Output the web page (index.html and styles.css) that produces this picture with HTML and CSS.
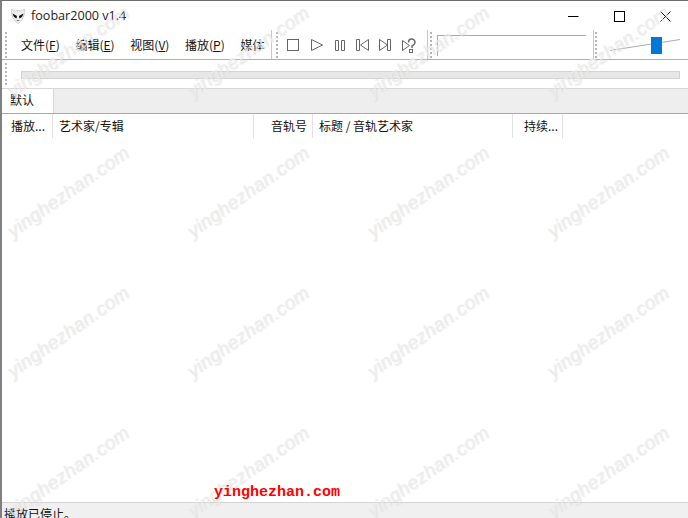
FILE: index.html
```
<!DOCTYPE html>
<html lang="zh">
<head>
<meta charset="utf-8">
<title>foobar2000 v1.4</title>
<link rel="stylesheet" href="styles.css">
</head>
<body>
<div class="window">
  <header class="titlebar">
    <svg class="logo" width="16" height="16" viewBox="0 0 16 16"><path d="M1.500 1 L5 3 Q8 2 11 3 L14.500 1 Q15 6 13 10 Q11 14 8 15.500 Q5 14 3 10 Q1 6 1.500 1Z" fill="#eeeeee" stroke="#b8b8b8" stroke-width=".6"/><path d="M2.500 5.500 L7 8 L6.500 10.500 Q3.500 9.500 2.500 5.500Z M13.500 5.500 L9 8 L9.500 10.500 Q12.500 9.500 13.500 5.500Z" fill="#111"/><path d="M6.800 12.500h2.400" stroke="#777"/></svg>
    <span class="title">foobar2000 v1.4</span>
    <div class="wincontrols">
      <svg width="11" height="11" viewBox="0 0 11 11"><path d="M0 5.500h10.500" stroke="#000"/></svg>
      <svg width="11" height="11" viewBox="0 0 11 11"><rect x=".5" y=".5" width="10" height="10" fill="none" stroke="#000"/></svg>
      <svg width="11" height="11" viewBox="0 0 11 11"><path d="M.5.5l10 10M10.500.5l-10 10" stroke="#000" fill="none"/></svg>
    </div>
  </header>
  <div class="toolbar">
    <div class="band band-menu">
      <span class="grip"></span>
      <nav class="menu">
        <span class="menu-item">文件(<u>F</u>)</span>
        <span class="menu-item">编辑(<u>E</u>)</span>
        <span class="menu-item">视图(<u>V</u>)</span>
        <span class="menu-item">播放(<u>P</u>)</span>
        <span class="menu-item">媒体</span>
      </nav>
    </div>
    <div class="band band-transport">
      <span class="grip"></span>
      <svg class="transport" width="132" height="16" viewBox="0 0 132 16" fill="none" stroke="#666">
        <rect x=".5" y="1.500" width="11" height="11"/>
        <path d="M24.500 1.500v11l11-5.500z"/>
        <path d="M48.500 2.500h3v10h-3zM54.500 2.500h3v10h-3z"/>
        <path d="M69.500 1.500v11h3v-11zM81.500 1.500v11l-8-5.500z"/>
        <path d="M103.500 1.500v11h-3v-11zM92.500 1.500v11l8-5.500z"/>
        <path d="M115.500 2.500v10l7-5z"/>
        <path d="M121.500 4.500q0-3.500 3-3.500t3.500 3q0 2.500-3 4v2" stroke-width="1.400"/>
        <rect x="122.500" y="11.500" width="3" height="3"/>
      </svg>
    </div>
    <div class="band band-seek">
      <span class="grip"></span>
      <div class="seek-frame"></div>
    </div>
    <div class="band band-volume">
      <span class="grip"></span>
      <div class="volume">
        <svg class="volume-line" width="70" height="12" viewBox="0 0 70 12"><path d="M0 11.500L70 .5" stroke="#aaa"/></svg>
        <span class="volume-thumb"></span>
      </div>
    </div>
  </div>
  <div class="seekrow">
    <span class="grip"></span>
    <div class="seekbar"></div>
  </div>
  <div class="tabs"><span class="tab">默认</span></div>
  <div class="columns">
    <span class="col col-a">播放...</span>
    <span class="col col-b">艺术家/专辑</span>
    <span class="col col-c">音轨号</span>
    <span class="col col-d">标题 / 音轨艺术家</span>
    <span class="col col-e">持续...</span>
  </div>
  <main class="list"></main>
  <footer class="status">播放已停止。</footer>
</div>
<div class="watermarks">
  <span class="wm"><b>yinghezhan.com</b></span><span class="wm"><b>yinghezhan.com</b></span><span class="wm"><b>yinghezhan.com</b></span><span class="wm"><b>yinghezhan.com</b></span>
  <span class="wm"><b>yinghezhan.com</b></span><span class="wm"><b>yinghezhan.com</b></span><span class="wm"><b>yinghezhan.com</b></span><span class="wm"><b>yinghezhan.com</b></span>
  <span class="wm"><b>yinghezhan.com</b></span><span class="wm"><b>yinghezhan.com</b></span><span class="wm"><b>yinghezhan.com</b></span><span class="wm"><b>yinghezhan.com</b></span>
  <span class="wm"><b>yinghezhan.com</b></span><span class="wm"><b>yinghezhan.com</b></span><span class="wm"><b>yinghezhan.com</b></span><span class="wm"><b>yinghezhan.com</b></span>
</div>
<div class="stamp">yinghezhan.com</div>
</body>
</html>
```
FILE: styles.css
```
* { box-sizing: border-box; }
html, body { margin: 0; height: 100%; overflow: hidden; background: #fff; }
body { position: relative; font: 12px/16px "Noto Sans CJK SC", "Liberation Sans", sans-serif; color: #111; }
.window { width: 688px; height: 518px; display: flex; flex-direction: column; border-top: 1px solid #6e6e6e; border-left: 2px solid #808080; overflow: hidden; }
.titlebar { flex: 0 0 29px; display: flex; align-items: center; padding-left: 7px; padding-top: 1px; }
.logo { margin-left: 1px; }
.title { margin-left: 5px; font: 12.600px/16px "Open Sans", "Liberation Sans", sans-serif; color: #222; }
.wincontrols { margin-left: auto; display: flex; gap: 35px; padding-right: 17px; }
.toolbar { flex: 0 0 30px; display: flex; border-bottom: 1px solid #b0b0b0; }
.band { display: flex; align-items: center; height: 29px; position: relative; }
.grip { width: 2px; height: 26px; flex: none; background-image: linear-gradient(#b5b5b5 50%, transparent 50%); background-size: 2px 4px; }
.band-menu { width: 270px; padding-left: 3px; border-right: 1px solid #c8c8c8; }
.menu { display: flex; margin-left: 14px; gap: 15.700px; }
.menu-item { white-space: nowrap; }
.band-transport { width: 156px; padding-left: 4px; border-right: 1px solid #c8c8c8; }
.transport { margin-left: 9px; margin-top: 2px; }
.band-seek { width: 165px; padding-left: 2px; }
.seek-frame { width: 149px; height: 21px; margin-left: 5px; margin-top: 1px; border-top: 1px solid #aaa; border-left: 1px solid #aaa; }
.band-volume { flex: 1; padding-left: 1px; border-left: 1px solid #c8c8c8; }
.volume { position: relative; width: 72px; height: 20px; margin-left: 13px; display: flex; align-items: center; }
.volume-line { flex: none; }
.volume-thumb { position: absolute; left: 41px; top: 2px; width: 11px; height: 17px; background: #0078d7; }
.seekrow { flex: 0 0 28px; display: flex; align-items: center; padding-left: 3px; }
.seekrow .grip { height: 22px; }
.seekbar { width: 659px; height: 8px; margin-left: 14px; margin-top: 1px; background: #e6e7e6; border: 1px solid #d2d4d2; }
.tabs { flex: 0 0 25px; background: #eee; border-top: 1px solid #d8d8d8; display: flex; align-items: flex-end; }
.tab { width: 52px; height: 24px; padding: 3px 0 0 8px; background: #fff; border-right: 1px solid #d8d8d8; }
.columns { flex: 0 0 25px; display: flex; border-top: 1px solid #aaa; background: #fff; }
.col { padding: 4px 0 0 8px; border-right: 1px solid #e2e2e2; white-space: nowrap; }
.col-a { width: 51px; padding-left: 9px; }
.col-b { width: 201px; padding-left: 6px; }
.col-c { width: 59px; padding-left: 17px; }
.col-d { width: 200px; padding-left: 6px; }
.col-e { width: 50px; padding-left: 11px; }
.list { flex: 1; }
.status { flex: 0 0 16px; border-top: 1px solid #d4d4d4; background: #f0f0f0; padding: 3px 0 0 2px; overflow: hidden; }
.watermarks { position: absolute; left: -22px; top: -18px; display: grid; grid-template-columns: repeat(4, 180px); grid-auto-rows: 140px; pointer-events: none; }
.wm { display: flex; align-items: center; justify-content: center; }
.wm b { transform: rotate(-35deg); font: italic 400 19px/20px "Liberation Sans", sans-serif; letter-spacing: .4px; color: rgba(236,236,236,.8); text-shadow: 1px 1px 1px rgba(205,205,205,.4); white-space: nowrap; }
.stamp { position: absolute; left: 214px; top: 484px; font: 700 15px/18px "Liberation Mono", monospace; color: #f00; }
```
